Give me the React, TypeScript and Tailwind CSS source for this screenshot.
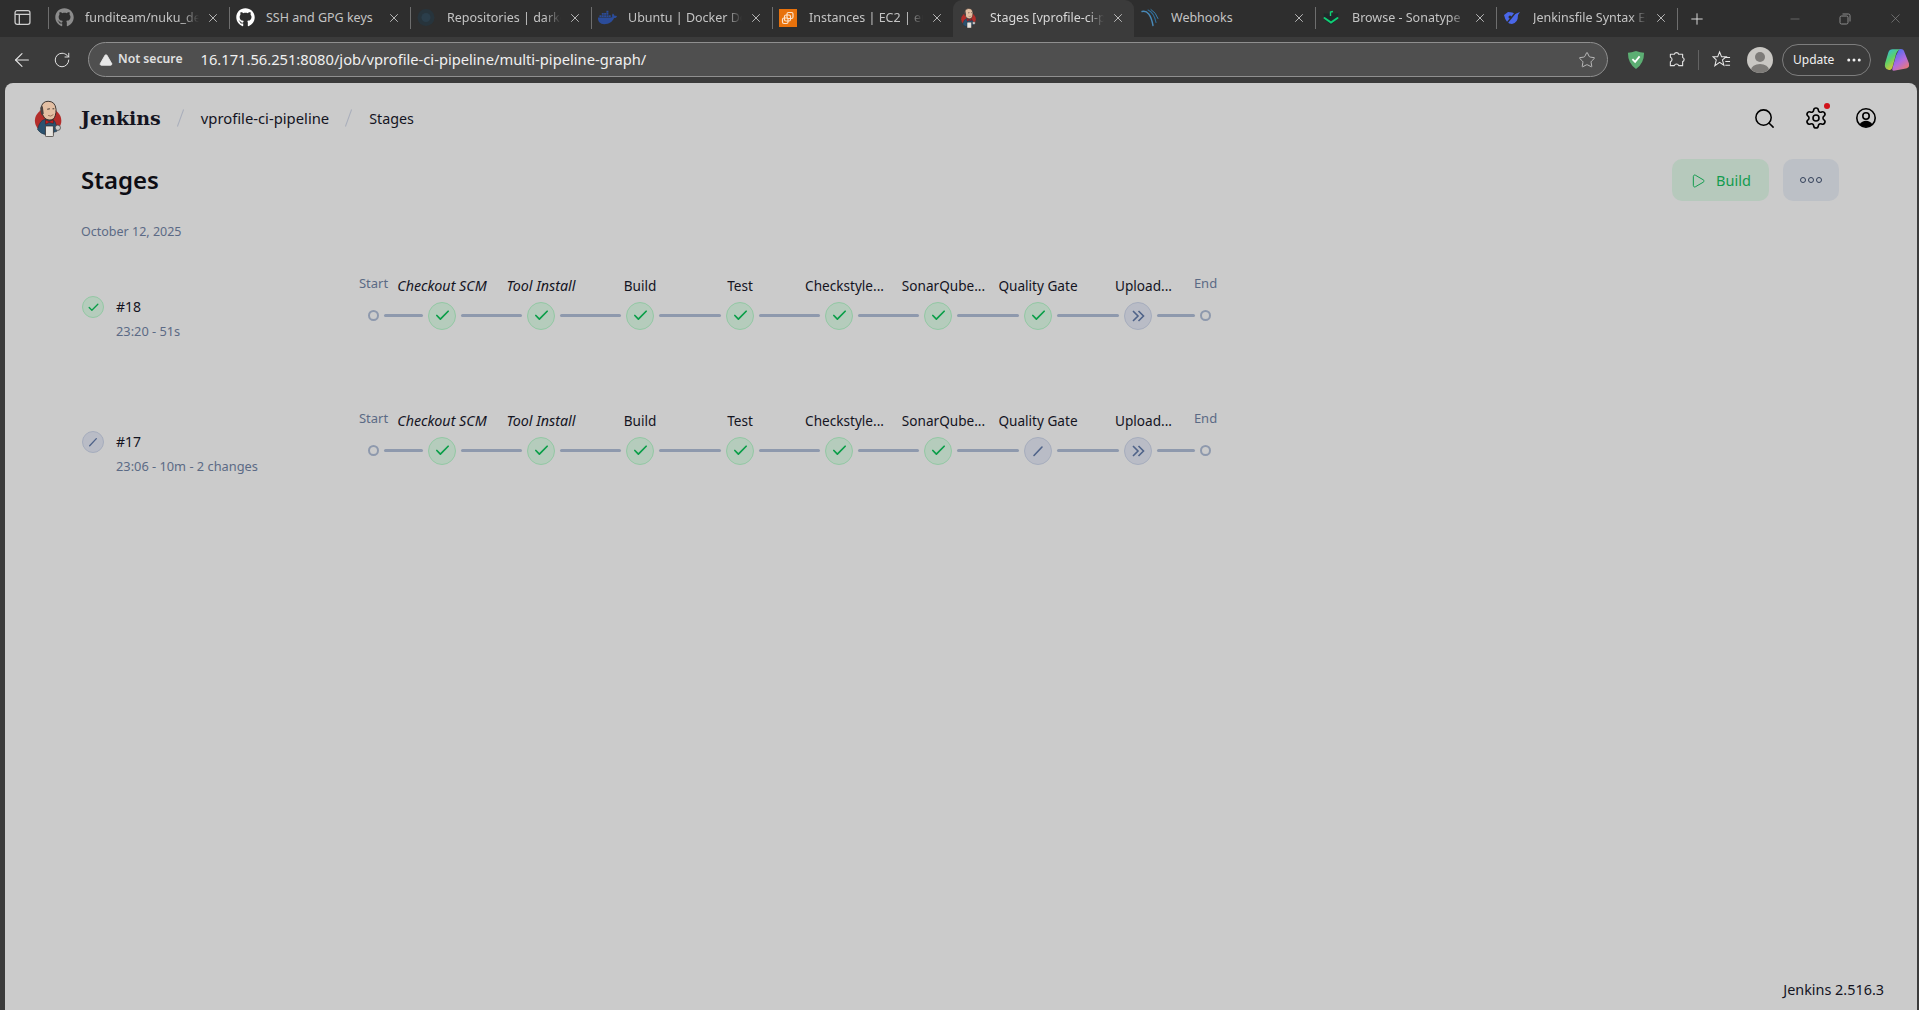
import { Settings, Search, Play, Check, RotateCw, ArrowLeft, Star, Plus, X, Minus, TriangleAlert, Ellipsis } from "lucide-react";
import { FaGithub, FaDocker } from "react-icons/fa";
import type { ReactNode } from "react";

function JenkinsLogo({ className }: { className: string }) {
  return (
    <svg viewBox="5 3 34 41" className={className}>
      <ellipse cx="21" cy="26" rx="15" ry="14" fill="#b32d2a" />
      <path d="M9 36 Q11 26 18 24 L27 25 Q31 29 31 38 L19 42 Q12 41 9 36Z" fill="#2b526f" stroke="#1c2f3f" strokeWidth=".6" />
      <path d="M13 12 Q14 4 21 4 Q29 4 30 13 Q30 21 27 24 Q22 27 17 23 Q14 20 13 12Z" fill="#e3bfa3" stroke="#2b2422" strokeWidth="1" />
      <path d="M13 9 Q11 14 14 20 L16 18 L15 10Z" fill="#4a4241" />
      <path d="M20 13 l3 -.5 M26 12.5 l2 0" stroke="#2b2422" strokeWidth="1" />
      <path d="M21 20 Q24 22 27 19" stroke="#8a5d4a" strokeWidth=".9" fill="none" />
      <path d="M18 25 L22 27 L27 25 L27 29 L22 28 L18 30Z" fill="#c9201f" stroke="#3a1210" strokeWidth=".5" />
      <rect x="18" y="32" width="9" height="12" rx="1" fill="#e6e4df" stroke="#2b2422" strokeWidth=".8" />
      <circle cx="32" cy="34" r="3" fill="#c9c9c9" stroke="#3a3a3a" strokeWidth=".8" />
    </svg>
  );
}

function Ec2Icon() {
  return (
    <svg viewBox="0 0 18 18" className="h-[18px] w-[18px]">
      <rect width="18" height="18" fill="#e8720c" />
      <g fill="none" stroke="#fbe3cc" strokeWidth="1.2">
        <rect x="8" y="3.5" width="6" height="6" rx="1.5" />
        <rect x="5.5" y="6" width="6" height="6" rx="1.5" />
        <rect x="3.5" y="9" width="5.5" height="5.5" rx="1.5" />
      </g>
    </svg>
  );
}

function WebhookIcon() {
  return (
    <svg viewBox="0 0 18 18" className="h-[19px] w-[18px]" fill="none" strokeLinecap="round">
      <path d="M1 3 Q9 1 12 17" stroke="#4a8ab8" strokeWidth="1.4" />
      <path d="M7 1.5 Q13 4 15 14" stroke="#2d6f9e" strokeWidth="1.1" />
      <path d="M10 1 Q15 4 17 10" stroke="#3a7fae" strokeWidth="1" />
    </svg>
  );
}

function SonatypeIcon() {
  return (
    <svg viewBox="0 0 18 18" className="h-[19px] w-[18px]" fill="none">
      <path d="M2 5 L3 11 L9 16 L15 11 L16 5" fill="#20282b" stroke="#20282b" />
      <path d="M2.5 9.5 L9 14 L15.5 9.5" stroke="#0fcf74" strokeWidth="2" strokeLinecap="round" />
      <path d="M8.5 3 V7.5 M8.5 3.5 L11 3" stroke="#0fcf74" strokeWidth="1.4" />
    </svg>
  );
}

function JenkinsfileIcon() {
  return (
    <svg viewBox="0 0 18 18" className="h-[18px] w-[18px]" fill="none">
      <path d="M1 6 Q3 15 9 15 Q15 14 15 6 L17 3 L12 5 Q10 3 5 3 Z" fill="#4a67e8" />
      <path d="M4 14 L13 3" stroke="#2e2e2e" strokeWidth="1.4" />
      <circle cx="7" cy="8" r="1.5" fill="#2e2e2e" />
    </svg>
  );
}

function ElasticIcon() {
  return (
    <svg viewBox="0 0 18 18" className="h-[19px] w-[18px]">
      <circle cx="9" cy="9" r="8.5" fill="#27343c" />
      <circle cx="9" cy="9" r="4.5" fill="#2b3e4b" />
    </svg>
  );
}

const tabs: { title: string; icon: ReactNode; sep: boolean; active?: boolean; fade?: boolean }[] = [
  { title: "funditeam/nuku_dev", icon: <FaGithub className="h-[19px] w-[19px] text-[#8c8c8c]" />, sep: true, fade: true },
  { title: "SSH and GPG keys", icon: <FaGithub className="h-[19px] w-[19px] text-white" />, sep: true },
  { title: "Repositories | darkoworld", icon: <ElasticIcon />, sep: true, fade: true },
  { title: "Ubuntu | Docker Docs", icon: <FaDocker className="h-[19px] w-[19px] text-[#2b4c9a]" />, sep: true, fade: true },
  { title: "Instances | EC2 | eu-north", icon: <Ec2Icon />, sep: true, fade: true },
  { title: "Stages [vprofile-ci-pipeline]", icon: <JenkinsLogo className="h-[20px] w-[18px]" />, sep: false, active: true, fade: true },
  { title: "Webhooks", icon: <WebhookIcon />, sep: false },
  { title: "Browse - Sonatype", icon: <SonatypeIcon />, sep: true, fade: true },
  { title: "Jenkinsfile Syntax Error", icon: <JenkinsfileIcon />, sep: true, fade: true },
];

function Tab({ title, icon, sep, active, fade }: (typeof tabs)[number]) {
  return (
    <div className={`relative flex h-[37px] w-[181px] flex-none items-center pb-[2px] ${active ? "rounded-t-[9px] bg-[#3b3b3b]" : ""}`}>
      {sep && <div className="h-[22px] w-px flex-none bg-[#6e6e6e]" />}
      <div className={`flex w-[26px] flex-none items-center justify-start ${sep ? "ml-[6px]" : "ml-[7px]"}`}>{icon}</div>
      <div className="ml-[4px] w-[114px] flex-none overflow-hidden">
        <div
          className={`whitespace-nowrap text-[12.5px] leading-[16px] ${active ? "text-[#d8d8d8]" : "text-[#c4c4c4]"} ${
            fade ? "[mask-image:linear-gradient(to_right,black_86%,transparent_100%)]" : ""
          }`}
        >
          {title}
        </div>
      </div>
      <X className="ml-[7px] h-[14px] w-[14px] flex-none text-[#d4d4d4]" strokeWidth={1.4} />
    </div>
  );
}

function TabStrip() {
  return (
    <div className="flex h-[37px] flex-none items-center bg-[#2e2e2e]">
      <div className="flex w-[44px] flex-none justify-center pb-[2px]">
        <svg viewBox="0 0 16 16" className="h-[17px] w-[17px]" fill="none" stroke="#cfcfcf" strokeWidth="1.2">
          <rect x="1" y="1.5" width="14" height="13" rx="2" />
          <path d="M1 5 H15 M5 5 V14" />
        </svg>
      </div>
      <div className="w-[4px] flex-none" />
      {tabs.map((t) => (
        <Tab key={t.title} {...t} />
      ))}
      <div className="h-[22px] w-px flex-none bg-[#6e6e6e]" />
      <Plus className="ml-[10px] h-[18px] w-[18px] flex-none text-[#dcdcdc]" strokeWidth={1.3} />
      <div className="ml-auto flex items-center pr-[16px] text-[#8d8d8d]">
        <Minus className="h-[14px] w-[14px]" strokeWidth={1} />
        <svg viewBox="0 0 12 12" className="ml-[37px] h-[12px] w-[12px]" fill="none" stroke="#8d8d8d" strokeWidth="1">
          <rect x="1" y="3" width="8" height="8" rx="1.5" />
          <path d="M3.5 1 H9.5 Q11 1 11 2.5 V8.5" />
        </svg>
        <X className="ml-[37px] h-[15px] w-[15px]" strokeWidth={1} />
      </div>
    </div>
  );
}

function Toolbar() {
  return (
    <div className="flex h-[46px] flex-none items-center bg-[#3b3b3b] pb-[1px]">
      <ArrowLeft className="ml-[11px] h-[22px] w-[22px] flex-none text-[#e6e6e6]" strokeWidth={1.2} />
      <RotateCw className="ml-[20px] h-[18px] w-[18px] flex-none text-[#e6e6e6]" strokeWidth={1.3} />
      <div className="ml-[17px] flex h-[35px] w-[1520px] flex-none items-center rounded-full border border-[#8f8f8f] bg-[#4f4f4f]">
        <TriangleAlert className="ml-[10px] h-[14px] w-[14px] flex-none fill-[#e8e8e8] text-[#e8e8e8]" strokeWidth={1.5} />
        <span className="ml-[5px] text-[12.2px] font-semibold text-[#e0e0e0]">Not secure</span>
        <span className="ml-[18px] text-[14.7px] text-[#f0f0f0]">16.171.56.251:8080/job/vprofile-ci-pipeline/multi-pipeline-graph/</span>
        <Star className="ml-auto mr-[11px] h-[18px] w-[18px] flex-none text-[#c4c4c4]" strokeWidth={1.2} />
      </div>
      <svg viewBox="0 0 20 22" className="ml-[19px] h-[20px] w-[18px] flex-none">
        <path d="M10 1 Q15 3 19 3 Q19 15 10 21 Q1 15 1 3 Q5 3 10 1Z" fill="#5cae73" />
        <path d="M6 10 L9 13 L14 7" stroke="#fff" strokeWidth="2" fill="none" />
      </svg>
      <svg viewBox="0 0 24 24" className="ml-[21px] h-[21px] w-[21px] flex-none" fill="none" stroke="#e0e0e0" strokeWidth="1.3" strokeLinejoin="round">
        <path d="M5 6 H9.5 A2.6 2.6 0 0 1 14.5 6 H19 V9.8 A2.4 2.4 0 0 1 19 14.4 V19 H14.5 A2.6 2.6 0 0 0 9.5 19 H5 V14.5 A2.6 2.6 0 0 0 5 9.5 Z" />
      </svg>
      <div className="ml-[11px] h-[20px] w-px flex-none bg-[#636363]" />
      <svg viewBox="0 0 20 20" className="ml-[13px] h-[19px] w-[19px] flex-none" fill="none" stroke="#e6e6e6" strokeWidth="1.1">
        <path d="M8 2 L10 7 H15 L11 10.5 L12.5 16 L8 13 L3 16.5 L4.5 10.5 L1 7 H6Z" />
        <path d="M13.5 8 H19 M14 12 H19 M14 16 H19" />
      </svg>
      <div className="ml-[16px] flex h-[26px] w-[26px] flex-none items-center justify-center overflow-hidden rounded-full bg-[#c9c7c3]">
        <svg viewBox="0 0 26 26" className="h-[26px] w-[26px]">
          <circle cx="13" cy="10" r="5" fill="#7d7b78" />
          <ellipse cx="13" cy="23" rx="9" ry="6" fill="#7d7b78" />
        </svg>
      </div>
      <div className="ml-[9px] flex h-[32px] w-[89px] flex-none items-center rounded-full border border-[#7d7d7d] pl-[10px]">
        <span className="text-[12px] text-[#f0f0f0]">Update</span>
        <Ellipsis className="ml-[11px] h-[18px] w-[18px] text-[#f0f0f0]" strokeWidth={2} />
      </div>
      <svg viewBox="0 0 24 24" className="ml-[13px] h-[26px] w-[26px] flex-none">
        <defs>
          <linearGradient id="cpa" x1="0" y1="0" x2="0.6" y2="1">
            <stop offset="0" stopColor="#2fb5f0" />
            <stop offset=".5" stopColor="#5ad16a" />
            <stop offset="1" stopColor="#f5c32c" />
          </linearGradient>
          <linearGradient id="cpb" x1="0.2" y1="0" x2="0.8" y2="1">
            <stop offset="0" stopColor="#3f6ef0" />
            <stop offset=".55" stopColor="#b06be0" />
            <stop offset="1" stopColor="#f07a6a" />
          </linearGradient>
        </defs>
        <path d="M14 2 Q18 1 19 5 L23 15 Q24 20 19 20 L9 22 Q7 22 8 19 L11 8 Z" fill="url(#cpb)" />
        <path d="M8 2 H15 Q12 3 11 7 L8 18 Q7 22 4 21 Q0 20 1 15 L4 5 Q5 2 8 2Z" fill="url(#cpa)" />
      </svg>
    </div>
  );
}

function UserIcon() {
  return (
    <svg viewBox="0 0 24 24" className="h-[24px] w-[24px]" fill="none">
      <circle cx="12" cy="12" r="9.2" stroke="#000" strokeWidth="1.6" />
      <circle cx="12" cy="10" r="3.2" stroke="#000" strokeWidth="1.6" />
      <path d="M5.5 18.5 Q8 14.8 12 14.8 Q16 14.8 18.5 18.5 Q15.5 21 12 21 Q8.5 21 5.5 18.5Z" fill="#000" />
    </svg>
  );
}

function Header() {
  return (
    <header className="flex h-[70px] flex-none items-center pl-[29px] pr-[39px]">
      <JenkinsLogo className="h-[37px] w-[30px] flex-none" />
      <span className="ml-[17px] font-['DejaVu_Serif'] text-[19px] font-bold text-[#14141f]">Jenkins</span>
      <span className="ml-[19px] h-[18px] w-px rotate-[20deg] bg-[#a9aebb]" />
      <span className="ml-[20px] text-[14.8px] text-[#14141f]">vprofile-ci-pipeline</span>
      <span className="ml-[19px] h-[18px] w-px rotate-[20deg] bg-[#a9aebb]" />
      <span className="ml-[20px] pt-[2px] text-[14.3px] text-[#14141f]">Stages</span>
      <div className="ml-auto flex items-center gap-[26px] text-black">
        <Search className="mr-[2px] h-[23px] w-[23px]" strokeWidth={1.6} />
        <div className="relative">
          <Settings className="h-[24px] w-[24px]" strokeWidth={1.6} />
          <span className="absolute -right-[2px] -top-[3px] h-[6px] w-[6px] rounded-full bg-[#d1121a]" />
        </div>
        <UserIcon />
      </div>
    </header>
  );
}

type Kind = "ok" | "paused" | "skip";

function Glyph({ kind, small }: { kind: Kind; small?: boolean }) {
  if (kind === "ok")
    return <Check className={`${small ? "h-[13px] w-[13px]" : "h-[17px] w-[17px]"} text-[#0a9e48]`} strokeWidth={2.4} />;
  if (kind === "paused")
    return (
      <svg viewBox="0 0 12 12" className={small ? "h-[10px] w-[10px]" : "h-[12px] w-[12px]"}>
        <path d="M2 10.5 L10 2" stroke="#4f6389" strokeWidth="1.6" strokeLinecap="round" />
      </svg>
    );
  return (
    <svg viewBox="0 0 16 16" className="h-[16px] w-[16px]" fill="none" stroke="#4f6389" strokeWidth="1.6">
      <path d="M3 3 L8 8 L3 13 M8.5 3 L13.5 8 L8.5 13" />
    </svg>
  );
}

function Node({ kind, small }: { kind: Kind; small?: boolean }) {
  return (
    <div
      className={`flex flex-none items-center justify-center rounded-full border-[1.5px] ${small ? "h-[22px] w-[22px]" : "h-[28px] w-[28px]"} ${
        kind === "ok" ? "border-[#93c8a4] bg-[#b5ccbc]" : "border-[#a6adbd] bg-[#b9bcc6]"
      }`}
    >
      <Glyph kind={kind} small={small} />
    </div>
  );
}

function Terminal({ label }: { label: string }) {
  return (
    <div className="flex w-[11px] flex-none flex-col items-center">
      <div className="whitespace-nowrap text-[13px] leading-[18px] text-[#5b6a85]">{label}</div>
      <div className="mb-[9px] mt-[17.5px] h-[11px] w-[11px] flex-none rounded-full border-[2.5px] border-[#8e99ad]" />
    </div>
  );
}

function Stage({ name, kind, italic, truncated }: { name: string; kind: Kind; italic?: boolean; truncated?: boolean }) {
  return (
    <div className="flex w-[28px] flex-none flex-col items-center">
      <div
        className={`whitespace-nowrap leading-[18px] text-[#14141f] ${italic ? "text-[14.3px] italic" : "text-[13.6px]"} ${
          truncated ? "ml-[11px]" : ""
        }`}
      >
        {name}
      </div>
      <div className="mt-[7px]">
        <Node kind={kind} />
      </div>
    </div>
  );
}

function Line({ w }: { w: string }) {
  return <div className={`mb-[13px] h-[3px] flex-none rounded-full bg-[#8e99ad] ${w}`} />;
}

function BuildRow({ num, sub, status, quality }: { num: string; sub: string; status: Kind; quality: Kind }) {
  return (
    <div className="flex h-[135px] flex-none items-start">
      <div className="flex w-[287px] flex-none items-start pl-[1px] pt-[22px]">
        <Node kind={status} small />
        <div className="ml-[12px]">
          <div className="text-[14px] leading-[22px] text-[#14141f]">{num}</div>
          <div className="mt-[4px] text-[12.8px] leading-[18px] text-[#5b6a85]">{sub}</div>
        </div>
      </div>
      <div className="flex items-end gap-[5px]">
        <Terminal label="Start" />
        <Line w="w-[39px]" />
        <Stage name="Checkout SCM" kind="ok" italic />
        <Line w="w-[61px]" />
        <Stage name="Tool Install" kind="ok" italic />
        <Line w="w-[61px]" />
        <Stage name="Build" kind="ok" />
        <Line w="w-[62px]" />
        <Stage name="Test" kind="ok" />
        <Line w="w-[61px]" />
        <Stage name="Checkstyle..." kind="ok" truncated />
        <Line w="w-[61px]" />
        <Stage name="SonarQube..." kind="ok" truncated />
        <Line w="w-[62px]" />
        <Stage name="Quality Gate" kind={quality} />
        <Line w="w-[62px]" />
        <Stage name="Upload..." kind="skip" truncated />
        <Line w="w-[38px]" />
        <Terminal label="End" />
      </div>
    </div>
  );
}

export default function App() {
  return (
    <div className="flex h-screen w-full flex-col overflow-hidden bg-[#3b3b3b] font-['Noto_Sans',sans-serif]">
      <TabStrip />
      <Toolbar />
      <main className="ml-[5px] mr-[2px] flex min-h-0 flex-1 flex-col rounded-t-[8px] bg-[#cbcbcb]">
        <Header />
        <div className="mt-[6px] flex h-[42px] flex-none items-center justify-between pl-[76px] pr-[78px]">
          <h1 className="text-[24px] font-semibold leading-[32px] text-[#0d0d14]">Stages</h1>
          <div className="flex gap-[14px]">
            <button className="flex h-[42px] w-[97px] items-center justify-center gap-[10px] rounded-[10px] bg-[#b6c9bc] pt-[2px] text-[14.5px] text-[#139c4f]">
              <Play className="h-[16px] w-[16px]" strokeWidth={1.5} />
              Build
            </button>
            <button className="flex h-[42px] w-[56px] items-center justify-center gap-[2px] rounded-[10px] bg-[#bcc0c6]">
              <span className="h-[6px] w-[6px] rounded-full border border-[#33405a]" />
              <span className="h-[6px] w-[6px] rounded-full border border-[#33405a]" />
              <span className="h-[6px] w-[6px] rounded-full border border-[#33405a]" />
            </button>
          </div>
        </div>
        <div className="mt-[22px] pl-[76px] text-[12.5px] leading-[18px] text-[#5b6a85]">October 12, 2025</div>
        <div className="mt-[33px] flex flex-col pl-[76px]">
          <BuildRow num="#18" sub="23:20 - 51s" status="ok" quality="ok" />
          <BuildRow num="#17" sub="23:06 - 10m - 2 changes" status="paused" quality="paused" />
        </div>
        <footer className="mt-auto flex h-[40px] items-center justify-end pr-[33px] text-[14.4px] text-[#14141f]">Jenkins 2.516.3</footer>
      </main>
    </div>
  );
}
